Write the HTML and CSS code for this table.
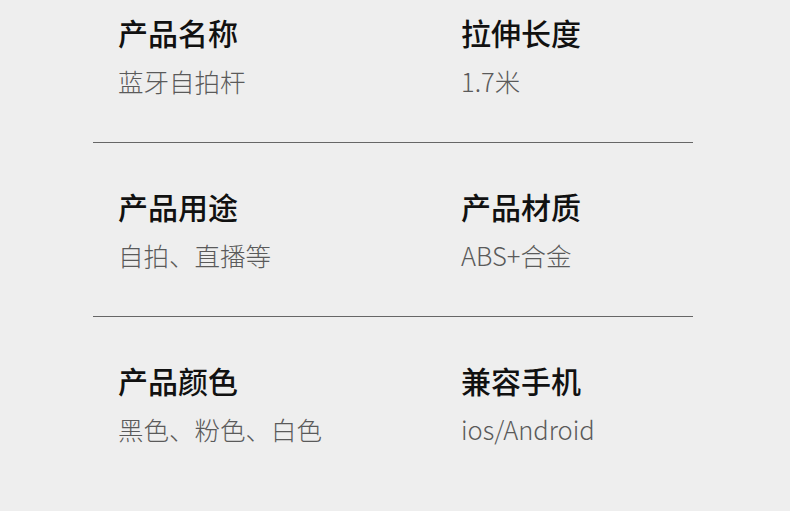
FILE: index.html
```html
<!DOCTYPE html>
<html lang="zh-CN">
<head>
    <meta charset="UTF-8">
    <meta name="viewport" content="width=device-width, initial-scale=1.0">
    <title>产品参数</title>
    <link rel="stylesheet" href="styles.css">
</head>
<body>
    <div class="spec-list">
        <div class="spec-row">
            <div class="spec-item">
                <div class="spec-name">产品名称</div>
                <div class="spec-value">蓝牙自拍杆</div>
            </div>
            <div class="spec-item">
                <div class="spec-name">拉伸长度</div>
                <div class="spec-value">1.7米</div>
            </div>
        </div>
        <div class="spec-row">
            <div class="spec-item">
                <div class="spec-name">产品用途</div>
                <div class="spec-value">自拍、直播等</div>
            </div>
            <div class="spec-item">
                <div class="spec-name">产品材质</div>
                <div class="spec-value">ABS+合金</div>
            </div>
        </div>
        <div class="spec-row">
            <div class="spec-item">
                <div class="spec-name">产品颜色</div>
                <div class="spec-value">黑色、粉色、白色</div>
            </div>
            <div class="spec-item">
                <div class="spec-name">兼容手机</div>
                <div class="spec-value">ios/Android</div>
            </div>
        </div>
    </div>
</body>
</html>
```

FILE: styles.css
```css
body {
    margin: 0;
    background-color: #eeeeee;
    font-family: "Noto Sans CJK SC", "Noto Sans", sans-serif;
    height: 511px;
    overflow: hidden;
}

.spec-list {
    width: 600px;
    margin-left: 93px;
}

.spec-row {
    display: grid;
    grid-template-columns: 343px 1fr;
    padding: 43px 0 44px 25px;
    border-bottom: 1px solid #666;
}

.spec-row:first-child {
    padding-top: 12px;
}

.spec-row:last-child {
    border-bottom: none;
}

.spec-item {
    display: flex;
    flex-direction: column;
    gap: 12px;
}

.spec-name {
    font-size: 30px;
    line-height: 40px;
    font-weight: 500;
    color: #111;
}

.spec-value {
    font-size: 25.5px;
    line-height: 34px;
    font-weight: 300;
    color: #5a5a5a;
}
```
